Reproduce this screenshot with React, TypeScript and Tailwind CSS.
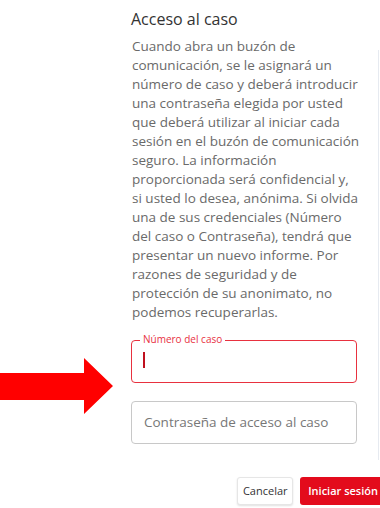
import React from 'react';

const body =
    'Cuando abra un buzón de comunicación, se le asignará un número de caso y deberá introducir una contraseña elegida por usted que deberá utilizar al iniciar cada sesión en el buzón de comunicación seguro. La información proporcionada será confidencial y, si usted lo desea, anónima. Si olvida una de sus credenciales (Número del caso o Contraseña), tendrá que presentar un nuevo informe. Por razones de seguridad y de protección de su anonimato, no podemos recuperarlas.';

// red arrow drawn over the page, pointing at the case number field
const Arrow = () => (
    <svg className="absolute left-0 top-[358px]" width="114" height="57" viewBox="0 0 114 57">
        <polygon points="0,15 84,15 84,0 113,28 84,56 84,42 0,42" fill="#ff0000" />
    </svg>
);

export default function App() {
    return (
        <div
            className="relative w-[380px] h-[508px] bg-white overflow-hidden flex"
            style={{ fontFamily: '"Open Sans", "Noto Sans", sans-serif' }}
        >
            <div className="flex-1 flex flex-col pl-[131px] pt-[8px]">
                <h2 className="text-[16px] leading-[22px] text-[#333]">Acceso al caso</h2>
                <p className="mt-[7px] w-[230px] pl-px text-[13.5px] leading-[19px] text-[#6a6a6a]">{body}</p>

                <div className="mt-[18px] w-[226px] relative h-[43px] rounded-[4px] border-[1.5px] border-[#e8313f]">
                    <span className="absolute -top-[9px] left-[8px] bg-white px-[3px] text-[10px] leading-[14px] text-[#e8313f]">
                        Número del caso
                    </span>
                    <div className="ml-[11px] mt-[11px] h-[16px] w-[1.5px] bg-[#c0101e]" />
                </div>

                <div className="mt-[18px] w-[226px] h-[43px] rounded-[4px] border border-[#c8c8c8] flex items-center px-[12px]">
                    <span className="text-[13.5px] text-[#777]">Contraseña de acceso al caso</span>
                </div>

                <div className="mt-[33px] flex justify-end gap-[7px] -mr-[12px]">
                    <button className="h-[28px] w-[56px] rounded-[3px] bg-white border border-[#e6e6e6] shadow-[0_1px_2px_rgba(0,0,0,0.12)] text-[11px] text-[#333] whitespace-nowrap">
                        Cancelar
                    </button>
                    <button className="h-[28px] pl-[8px] pr-[12px] rounded-[3px] bg-[#e30b1c] text-[11px] font-semibold text-white whitespace-nowrap">
                        Iniciar sesión
                    </button>
                </div>
            </div>

            <div className="w-px self-stretch mt-[50px] mb-[48px] mr-px bg-[#e6eaf0]" />

            <Arrow />
        </div>
    );
}
